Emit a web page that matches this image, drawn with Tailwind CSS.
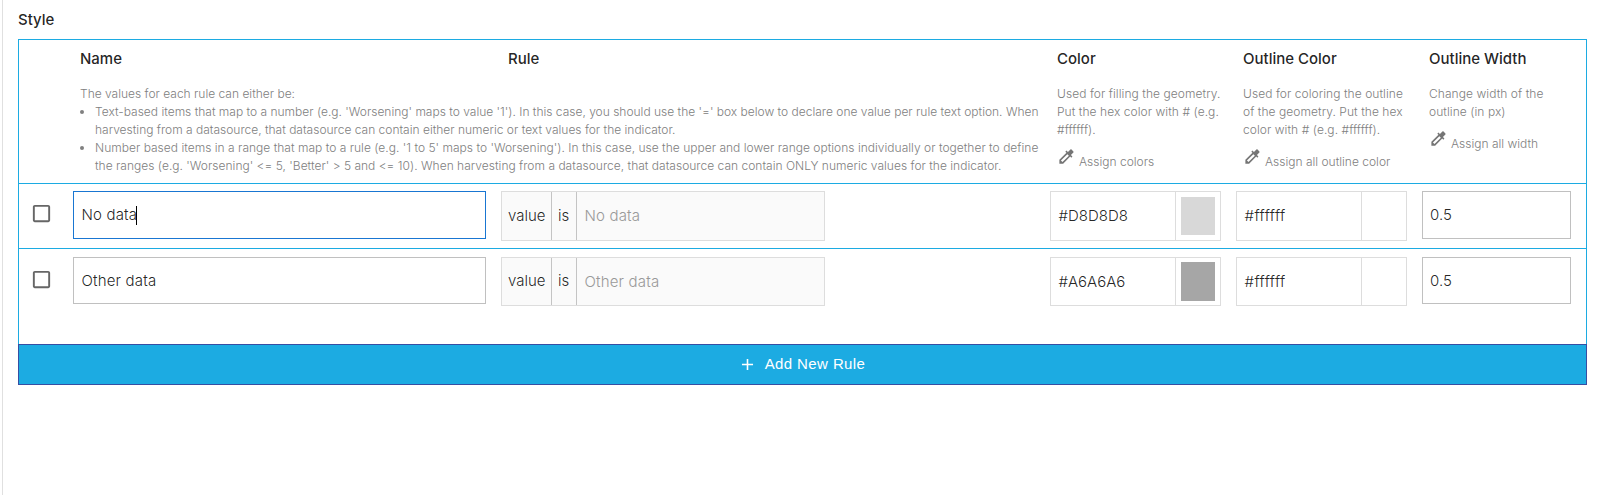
<!DOCTYPE html>
<html lang="en">
<head>
<meta charset="utf-8">
<title>Style</title>
<script src="https://cdn.jsdelivr.net/npm/@tailwindcss/browser@4"></script>
</head>
<body class="bg-white font-['Inter',sans-serif] text-[15px] leading-[18px] font-light text-black/87">
<svg class="hidden">
  <symbol id="picker" viewBox="0 0 24 24"><path d="M20.71 5.63l-2.34-2.34c-.39-.39-1.02-.39-1.41 0l-3.12 3.12-1.93-1.91-1.41 1.41 1.42 1.42L3 16.25V21h4.75l8.92-8.92 1.42 1.42 1.41-1.41-1.92-1.92 3.12-3.12c.4-.4.4-1.03.01-1.42zM6.92 19L5 17.08l8.06-8.06 1.92 1.92L6.92 19z"/></symbol>
  <symbol id="box" viewBox="0 0 24 24"><path d="M19 5v14H5V5h14m0-2H5c-1.1 0-2 .9-2 2v14c0 1.1.9 2 2 2h14c1.1 0 2-.9 2-2V5c0-1.1-.9-2-2-2z"/></symbol>
</svg>
<main class="ml-[2px] h-[495px] border-l border-[#e0e0e0] pl-[15px]">
  <h1 class="h-[39px] pt-[11px] font-medium">Style</h1>
  <section class="w-[1569px] border border-b-0 border-[#1cabe2]">
    <header class="grid h-[144px] grid-cols-[54px_977px_186px_186px_164px] border-b border-[#1cabe2] pt-[10px] text-xs leading-[18px] text-[#808080]">
      <div></div>
      <div class="pl-[7px]">
        <div class="flex h-[35px] text-[15px] font-medium text-black/87">
          <h2 class="w-[428px]">Name</h2>
          <h2>Rule</h2>
        </div>
        <p>The values for each rule can either be:</p>
        <ul class="list-disc pl-[15px] whitespace-nowrap">
          <li>Text-based items that map to a number (e.g. 'Worsening' maps to value '1'). In this case, you should use the '=' box below to declare one value per rule text option. When<br>harvesting from a datasource, that datasource can contain either numeric or text values for the indicator.</li>
          <li><span class="tracking-[0.016px]">Number based items in a range that map to a rule (e.g. '1 to 5' maps to 'Worsening'). In this case, use the upper and lower range options individually or together to define<br>the ranges (e.g. 'Worsening' &lt;= 5, 'Better' &gt; 5 and &lt;= 10). When harvesting from a datasource, that datasource can contain ONLY numeric values for the indicator.</span></li>
        </ul>
      </div>
      <div class="pl-[7px]">
        <h2 class="h-[35px] text-[15px] font-medium text-black/87">Color</h2>
        <p class="tracking-[0.06px]">Used for filling the geometry.<br>Put the hex color with # (e.g.<br>#ffffff).</p>
        <div class="flex pt-[8px]"><svg class="h-[19px] w-[19px] fill-[#757575]"><use href="#picker"/></svg><span class="pt-[6px] pl-[3px]">Assign colors</span></div>
      </div>
      <div class="pl-[7px]">
        <h2 class="h-[35px] text-[15px] font-medium text-black/87">Outline Color</h2>
        <p class="tracking-[0.06px]">Used for coloring the outline<br>of the geometry. Put the hex<br>color with # (e.g. #ffffff).</p>
        <div class="flex pt-[8px]"><svg class="h-[19px] w-[19px] fill-[#757575]"><use href="#picker"/></svg><span class="pt-[6px] pl-[3px]">Assign all outline color</span></div>
      </div>
      <div class="pl-[7px]">
        <h2 class="h-[35px] text-[15px] font-medium text-black/87">Outline Width</h2>
        <p class="tracking-[0.06px]">Change width of the<br>outline (in px)</p>
        <div class="flex pt-[8px]"><svg class="h-[19px] w-[19px] fill-[#757575]"><use href="#picker"/></svg><span class="pt-[6px] pl-[3px]">Assign all width</span></div>
      </div>
    </header>

    <div class="flex h-[65px] items-start border-b border-[#1cabe2] pt-[7px]">
      <svg class="mt-[11px] mr-[20px] ml-[11px] h-[23px] w-[23px] fill-[#666666]"><use href="#box"/></svg>
      <div class="flex h-[48px] w-[413px] items-center border border-[#1976d2] pl-[7.5px]"><span class="tracking-[0.15px]">No data</span><span class="-ml-px h-[19px] w-px bg-black"></span></div>
      <div class="ml-[15px] flex h-[50px] w-[324px] border border-[#dddddd] bg-[#fafafa] leading-[48px]">
        <div class="w-[50px] border-r border-[#c4c4c4] pl-[6px]">value</div>
        <div class="w-[25px] border-r border-[#c4c4c4] pl-[6px]">is</div>
        <div class="pl-[7.5px] tracking-[0.15px] text-[#999999]">No data</div>
      </div>
      <div class="ml-[225px] flex h-[50px] w-[171px] border border-[#dddddd] leading-[48px]">
        <div class="w-[125px] border-r border-[#dddddd] pl-[7.5px]">#D8D8D8</div>
        <div class="mt-[5px] ml-[5px] h-[38px] w-[34px] bg-[#d8d8d8]"></div>
      </div>
      <div class="ml-[15px] flex h-[50px] w-[171px] border border-[#dddddd] leading-[48px]">
        <div class="w-[125px] border-r border-[#dddddd] pl-[7.5px] tracking-[0.4px]">#ffffff</div>
      </div>
      <div class="ml-[15px] h-[48px] w-[149px] border border-[#c0c0c0] pl-[7px] leading-[46px]">0.5</div>
    </div>

    <div class="flex h-[95px] items-start pt-[8px]">
      <svg class="mt-[11px] mr-[20px] ml-[11px] h-[23px] w-[23px] fill-[#666666]"><use href="#box"/></svg>
      <div class="h-[47px] w-[413px] border border-[#c0c0c0] pl-[7.5px] leading-[46px] tracking-[0.18px]">Other data</div>
      <div class="ml-[15px] flex h-[49px] w-[324px] border border-[#dddddd] bg-[#fafafa] leading-[48px]">
        <div class="w-[50px] border-r border-[#c4c4c4] pl-[6px] leading-[46px]">value</div>
        <div class="w-[25px] border-r border-[#c4c4c4] pl-[6px] leading-[46px]">is</div>
        <div class="pl-[7.5px] tracking-[0.18px] text-[#999999]">Other data</div>
      </div>
      <div class="ml-[225px] flex h-[49px] w-[171px] border border-[#dddddd] leading-[48px]">
        <div class="w-[125px] border-r border-[#dddddd] pl-[7.5px]">#A6A6A6</div>
        <div class="mt-[4px] ml-[5px] h-[39px] w-[34px] bg-[#a6a6a6]"></div>
      </div>
      <div class="ml-[15px] flex h-[49px] w-[171px] border border-[#dddddd] leading-[48px]">
        <div class="w-[125px] border-r border-[#dddddd] pl-[7.5px] tracking-[0.4px]">#ffffff</div>
      </div>
      <div class="ml-[15px] h-[47px] w-[149px] border border-[#c0c0c0] pl-[7px] leading-[46px]">0.5</div>
    </div>
  </section>
  <button class="flex h-[41px] w-[1569px] items-center justify-center border border-[#374ea2] bg-[#1cabe2] pr-[2px] pb-px font-['Liberation_Sans',sans-serif] text-[15px] font-normal tracking-[0.4px] text-white"><svg class="mt-px mr-[8px] h-[19px] w-[19px] fill-white" viewBox="0 0 24 24"><path d="M19 13h-6v6h-2v-6H5v-2h6V5h2v6h6v2z"/></svg>Add New Rule</button>
</main>
</body>
</html>
